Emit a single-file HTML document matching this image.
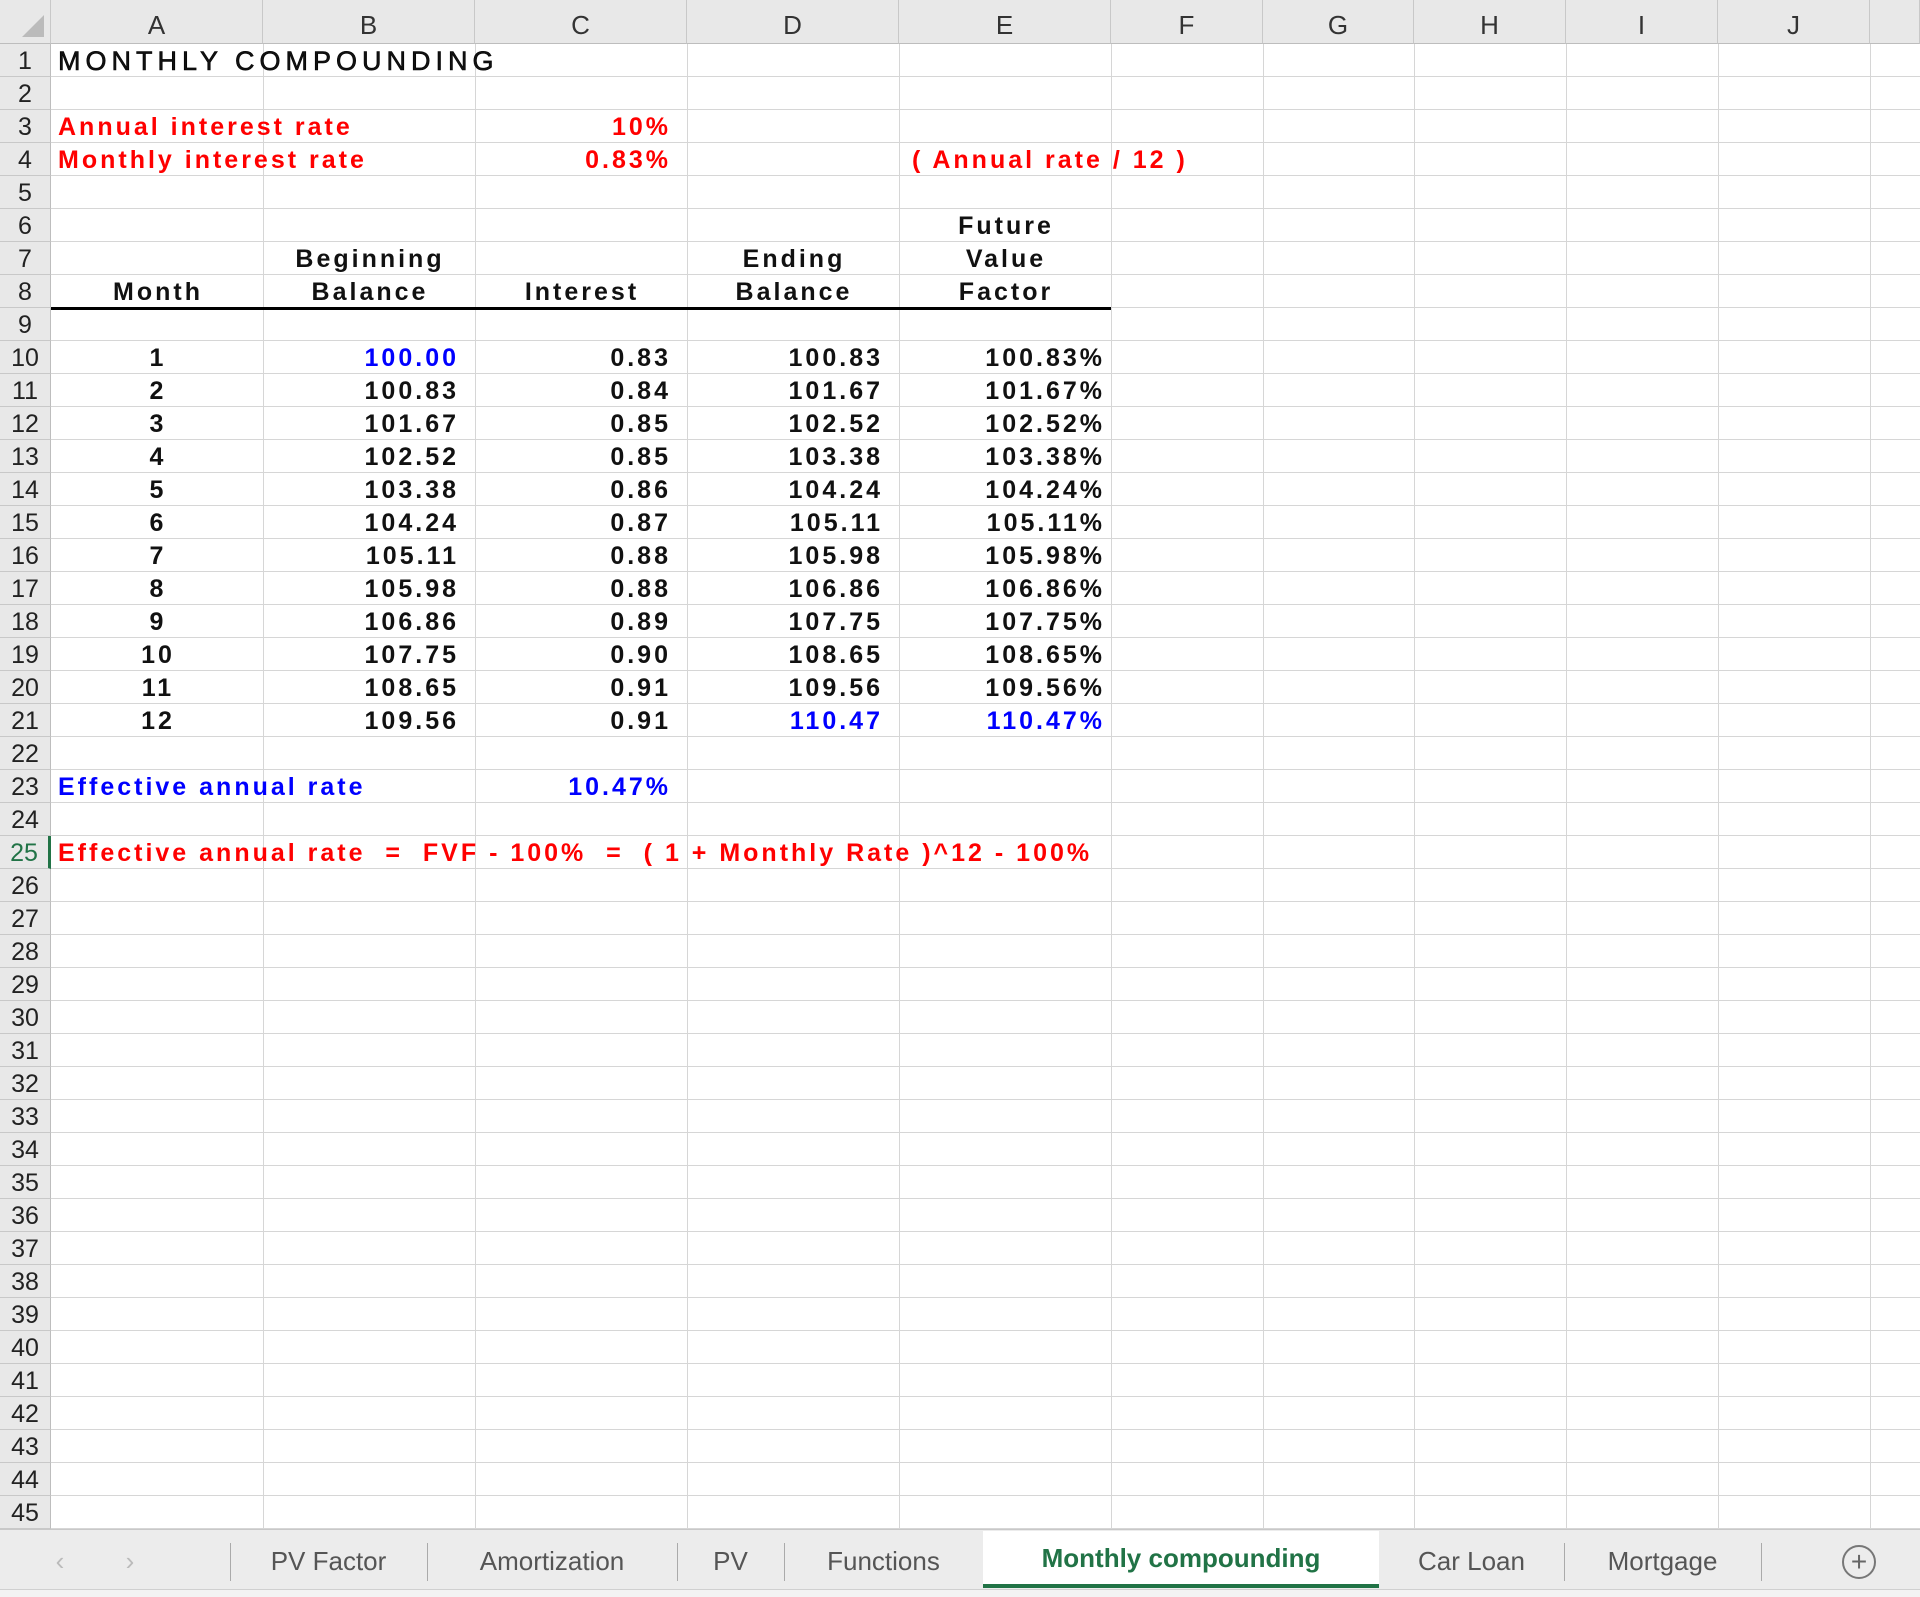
<!DOCTYPE html>
<html><head><meta charset="utf-8"><style>
body{margin:0;width:1920px;height:1596px;overflow:hidden;background:#fff;font-family:"Liberation Sans",Arial,sans-serif;position:relative}
.abs{position:absolute}
#grid{position:absolute;left:51px;top:44px;width:1869px;height:1485px;
background-image:repeating-linear-gradient(to bottom,transparent 0,transparent 32px,#d6d6d6 32px,#d6d6d6 33px);}
.vl{position:absolute;top:0;width:1px;height:1533px;background:#d6d6d6}
.hdr{position:absolute;top:0;height:44px;background:#e8e8e8;border-right:1px solid #c8c8c8;border-bottom:1px solid #bdbdbd;box-sizing:border-box;text-align:center;line-height:50px;font-size:26px;color:#333}
.rn{position:absolute;left:0;width:51px;height:33px;background:#e8e8e8;border-bottom:1px solid #c8c8c8;border-right:1px solid #bdbdbd;box-sizing:border-box;text-align:center;line-height:34px;font-size:25px;color:#222}
.c{position:absolute;height:33px;line-height:35px;font-size:25px;font-weight:bold;white-space:nowrap;color:#111;letter-spacing:3px}
.r{text-align:right;margin-right:-3px}.m{text-align:center;margin-left:1px}
.red{color:#f00}.blue{color:#00f}
.tab{position:absolute;top:1533px;height:57px;line-height:57px;font-size:26px;color:#555;text-align:center}
.sep{position:absolute;top:1543px;width:1px;height:38px;background:#aaa}
</style></head><body>
<div id="grid"></div>
<div class="vl" style="left:263px"></div><div class="vl" style="left:475px"></div><div class="vl" style="left:687px"></div><div class="vl" style="left:899px"></div><div class="vl" style="left:1111px"></div><div class="vl" style="left:1263px"></div><div class="vl" style="left:1414px"></div><div class="vl" style="left:1566px"></div><div class="vl" style="left:1718px"></div><div class="vl" style="left:1870px"></div>

<div class="hdr" style="left:0;width:51px"><div style="position:absolute;right:6px;bottom:6px;width:0;height:0;border-left:22px solid transparent;border-bottom:22px solid #bbb"></div></div>
<div class="hdr" style="left:51px;width:212px">A</div>
<div class="hdr" style="left:263px;width:212px">B</div>
<div class="hdr" style="left:475px;width:212px">C</div>
<div class="hdr" style="left:687px;width:212px">D</div>
<div class="hdr" style="left:899px;width:212px">E</div>
<div class="hdr" style="left:1111px;width:152px">F</div>
<div class="hdr" style="left:1263px;width:151px">G</div>
<div class="hdr" style="left:1414px;width:152px">H</div>
<div class="hdr" style="left:1566px;width:152px">I</div>
<div class="hdr" style="left:1718px;width:152px">J</div>
<div class="hdr" style="left:1870px;width:50px"></div>

<div id="rows"></div>
<script>
var h='';for(var i=1;i<=45;i++){var t=44+(i-1)*33;h+='<div class="rn" style="top:'+t+'px'+(i==25?';border-right:3px solid #217346;color:#217346':'')+'">'+i+'</div>';}
document.getElementById('rows').innerHTML=h;
function cell(r,x,w,cls,txt){document.write('<div class="c '+cls+'" style="top:'+(44+(r-1)*33)+'px;left:'+x+'px;width:'+w+'px">'+txt+'</div>');}
var A=[51,212],B=[263,196],C=[475,196],D=[687,196],E=[899,206];
cell(1,58,700,'','<span style="font-weight:normal;font-size:27px;letter-spacing:5px;-webkit-text-stroke:0.6px #000">MONTHLY COMPOUNDING</span>');
cell(3,58,400,'red','Annual interest rate');cell(3,C[0],C[1],'r red','10%');
cell(4,58,400,'red','Monthly interest rate');cell(4,C[0],C[1],'r red','0.83%');
cell(4,912,400,'red','( Annual rate / 12 )');
cell(6,899,212,'m','Future');cell(7,263,212,'m','Beginning');cell(7,687,212,'m','Ending');cell(7,899,212,'m','Value');
cell(8,51,212,'m','Month');cell(8,263,212,'m','Balance');cell(8,475,212,'m','Interest');cell(8,687,212,'m','Balance');cell(8,899,212,'m','Factor');
var b=['100.00','100.83','101.67','102.52','103.38','104.24','105.11','105.98','106.86','107.75','108.65','109.56'];
var it=['0.83','0.84','0.85','0.85','0.86','0.87','0.88','0.88','0.89','0.90','0.91','0.91'];
var e=['100.83','101.67','102.52','103.38','104.24','105.11','105.98','106.86','107.75','108.65','109.56','110.47'];
for(var k=0;k<12;k++){var r=10+k;cell(r,51,212,'m',k+1);cell(r,B[0],B[1],'r'+(k==0?' blue':''),b[k]);cell(r,C[0],C[1],'r',it[k]);cell(r,D[0],D[1],'r'+(k==11?' blue':''),e[k]);cell(r,E[0],E[1],'r'+(k==11?' blue':''),e[k]+'%');}
cell(23,58,400,'blue','Effective annual rate');cell(23,C[0],C[1],'r blue','10.47%');
cell(25,58,1200,'red','Effective annual rate&nbsp;&nbsp;=&nbsp;&nbsp;FVF - 100%&nbsp;&nbsp;=&nbsp;&nbsp;( 1 + Monthly Rate )^12 - 100%');
</script>
<div class="abs" style="left:51px;top:307px;width:1060px;height:3px;background:#000"></div>

<div class="abs" style="left:0;top:1529px;width:1920px;height:67px;background:#ececec;border-top:1px solid #c8c8c8"></div>
<div class="abs" style="left:0;top:1589px;width:1920px;height:7px;background:#f3f3f3;border-top:1px solid #d0d0d0"></div>
<div class="tab" style="left:40px;width:40px;color:#bbb">&#8249;</div>
<div class="tab" style="left:110px;width:40px;color:#bbb">&#8250;</div>
<div class="sep" style="left:230px"></div><div class="sep" style="left:427px"></div><div class="sep" style="left:677px"></div><div class="sep" style="left:784px"></div><div class="sep" style="left:1564px"></div><div class="sep" style="left:1761px"></div>
<div class="tab" style="left:230px;width:197px">PV Factor</div>
<div class="tab" style="left:427px;width:250px">Amortization</div>
<div class="tab" style="left:677px;width:107px">PV</div>
<div class="tab" style="left:784px;width:199px">Functions</div>
<div class="tab" style="left:983px;width:396px;background:#fff;color:#217346;font-weight:bold;border-bottom:4px solid #217346;box-sizing:border-box;line-height:55px;top:1531px">Monthly compounding</div>
<div class="tab" style="left:1379px;width:185px">Car Loan</div>
<div class="tab" style="left:1564px;width:197px">Mortgage</div>
<div class="abs" style="left:1842px;top:1545px;width:30px;height:30px;border:2px solid #777;border-radius:50%;text-align:center;line-height:30px;font-size:28px;color:#666">+</div>
</body></html>
